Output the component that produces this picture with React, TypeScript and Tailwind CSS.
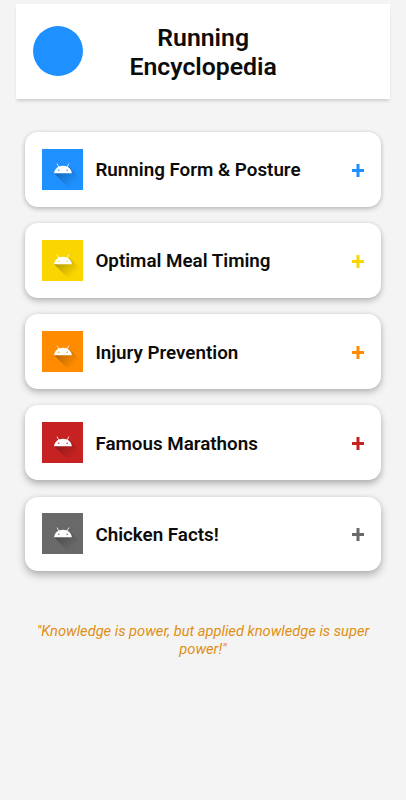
type Topic = {
  title: string;
  tile: string;
  plus: string;
  shadow: string;
};

const topics: Topic[] = [
  {
    title: 'Running Form & Posture',
    tile: 'bg-[#1e90ff]',
    plus: 'text-[#1e90ff]',
    shadow: 'shadow-[0_2px_5px_rgba(0,0,0,0.22),0_0_4px_rgba(0,0,0,0.07)]',
  },
  {
    title: 'Optimal Meal Timing',
    tile: 'bg-[#fbd500]',
    plus: 'text-[#fbd500]',
    shadow: 'shadow-[0_3px_6px_rgba(0,0,0,0.24),0_0_4px_rgba(0,0,0,0.07)]',
  },
  {
    title: 'Injury Prevention',
    tile: 'bg-[#ff8c00]',
    plus: 'text-[#ff8c00]',
    shadow: 'shadow-[0_3px_7px_rgba(0,0,0,0.26),0_0_4px_rgba(0,0,0,0.07)]',
  },
  {
    title: 'Famous Marathons',
    tile: 'bg-[#c62222]',
    plus: 'text-[#c62222]',
    shadow: 'shadow-[0_4px_7px_rgba(0,0,0,0.26),0_0_4px_rgba(0,0,0,0.07)]',
  },
  {
    title: 'Chicken Facts!',
    tile: 'bg-[#696969]',
    plus: 'text-[#696969]',
    shadow: 'shadow-[0_4px_8px_rgba(0,0,0,0.28),0_0_4px_rgba(0,0,0,0.07)]',
  },
];

const AndroidIcon = ({ id }: { id: string }) => (
  <svg viewBox="0 0 41 41" className="h-full w-full">
    <defs>
      <linearGradient id={id} x1="15" y1="19" x2="31" y2="35" gradientUnits="userSpaceOnUse">
        <stop offset="0" stopColor="#000" stopOpacity="0.3" />
        <stop offset="1" stopColor="#000" stopOpacity="0" />
      </linearGradient>
    </defs>
    {/* Long shadow under the head */}
    <path d="M11.8 24.3 L26.8 17.5 L41 31.7 V41 H28.5 Z" fill={`url(#${id})`} />
    <path d="M11.8 24.3 C12.2 19.7 15.8 16.7 20.7 16.7 S29.2 19.7 29.6 24.3 Z" fill="#fff" />
    <path
      d="M16.6 18 L14.9 14.9 M24.8 18 L26.5 14.9"
      stroke="#fff"
      strokeWidth="0.8"
      strokeLinecap="round"
    />
    <circle cx="16.5" cy="21.2" r="0.75" className="fill-current" />
    <circle cx="24.9" cy="21.2" r="0.75" className="fill-current" />
  </svg>
);

const TopicCard = ({ topic, id }: { topic: Topic; id: string }) => (
  <div
    className={`flex h-[74.7px] items-center rounded-[13px] bg-white pr-[17px] pl-[16.8px] ${topic.shadow}`}
  >
    <div className={`h-[41px] w-[41.5px] shrink-0 ${topic.tile} ${topic.plus}`}>
      <AndroidIcon id={id} />
    </div>
    <h2 className="mt-[2px] ml-[12.3px] flex-1 text-[18.8px] leading-6 font-semibold whitespace-nowrap text-[#0c0c0c]">
      {topic.title}
    </h2>
    <svg viewBox="0 0 12 13" className={`mt-[2px] h-[13px] w-[12px] ${topic.plus}`}>
      <path d="M6 0 V13 M0 6.5 H12" stroke="currentColor" strokeWidth="3" />
    </svg>
  </div>
);

const App = () => {
  return (
    <div className="min-h-screen bg-[#f4f4f4] px-[16.4px] pt-1 font-['Roboto',sans-serif]">
      <header className="flex h-[94.5px] items-center bg-white pl-[16.6px] shadow-[0_3px_3px_-1px_rgba(0,0,0,0.16)]">
        <div className="h-[50px] w-[50px] shrink-0 rounded-full bg-[#1e90ff]" />
        <h1 className="mt-[2px] ml-[29.2px] w-[182px] text-center text-[24.8px] leading-[29px] font-semibold text-[#0c0c0c]">
          Running
          <br />
          Encyclopedia
        </h1>
      </header>
      <main className="mt-[33.4px] flex flex-col gap-[16.5px] px-[8.4px]">
        {topics.map((topic, i) => (
          <TopicCard key={topic.title} topic={topic} id={`head-shadow-${i}`} />
        ))}
      </main>
      <p className="mt-[52px] text-center text-[14.65px] leading-[17.5px] text-[#e08f14] italic">
        "Knowledge is power, but applied knowledge is super
        <br />
        power!"
      </p>
    </div>
  );
};

export default App;
